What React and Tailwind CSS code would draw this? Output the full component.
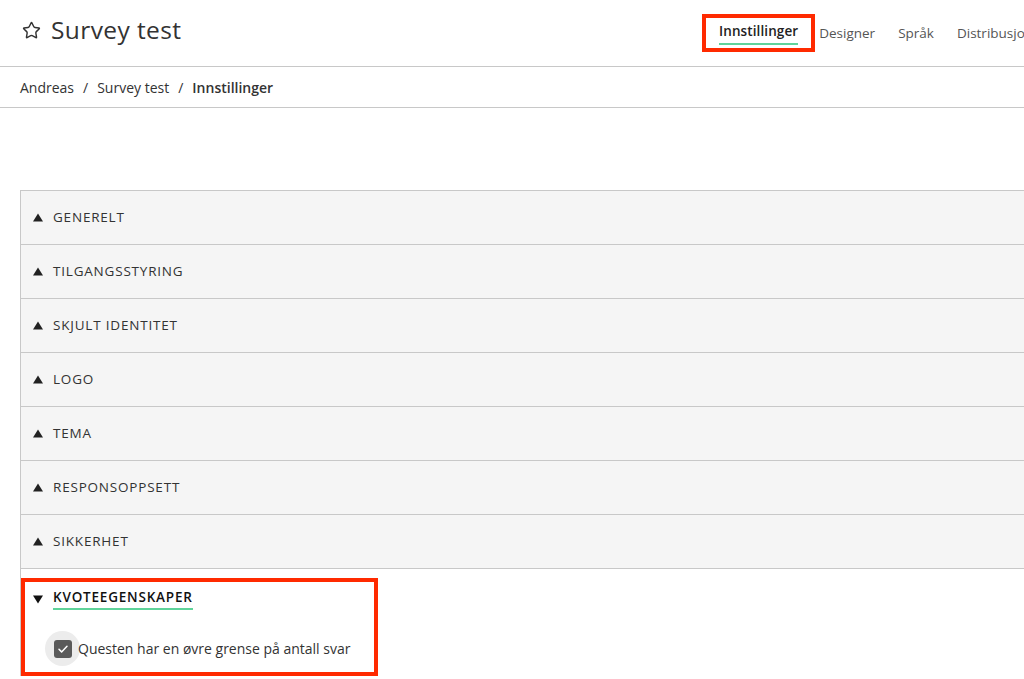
import { Star } from 'lucide-react'

const sections = [
  'GENERELT',
  'TILGANGSSTYRING',
  'SKJULT IDENTITET',
  'LOGO',
  'TEMA',
  'RESPONSOPPSETT',
  'SIKKERHET',
]

function Triangle({ open = false }) {
  return (
    <svg viewBox="0 0 10 10" className="h-[10px] w-[10px]" aria-hidden="true">
      {open ? <path d="M0 1.5h10L5 9.5z" fill="#111" /> : <path d="M5 0.5l5 8H0z" fill="#222" />}
    </svg>
  )
}

export default function App() {
  return (
    <div className="h-[679px] w-[1024px] overflow-hidden bg-white font-['Open_Sans',sans-serif] text-[#333]">
      <header className="flex h-[67px] items-center overflow-hidden border-b border-[#c8c8c8]">
        <div className="flex w-[702px] shrink-0 items-center pl-[22px] pb-[5px]">
          <Star className="h-[19px] w-[19px] text-[#333]" strokeWidth={1.8} />
          <h1 className="ml-[10px] text-[24.5px] leading-none tracking-[0.4px] text-[#333]">Survey test</h1>
        </div>
        <nav className="flex h-full shrink-0 items-center whitespace-nowrap text-[13.5px]">
          <div className="mr-[4px] flex h-[38px] items-center border-4 border-[#ff2a00] px-[13px]">
            <span className="border-b-2 border-[#5fd39a] pb-[1px] font-semibold tracking-[0.1px] text-[#222]">Innstillinger</span>
          </div>
          <span className="mr-[23px] text-[#555]">Designer</span>
          <span className="mr-[23px] text-[#555]">Språk</span>
          <span className="text-[#555]">Distribusjon</span>
        </nav>
      </header>

      <div className="flex h-[41px] items-center border-b border-[#c8c8c8] pl-[20px] text-[14px] text-[#333]">
        <span>Andreas</span>
        <span className="mx-[9px]">/</span>
        <span>Survey test</span>
        <span className="mx-[9px]">/</span>
        <span className="font-semibold">Innstillinger</span>
      </div>

      <div className="ml-[20px] mt-[82px] border-l border-[#c8c8c8]">
        {sections.map((s) => (
          <div
            key={s}
            className="flex h-[54px] items-center border-t border-[#c8c8c8] bg-[#f5f5f5] pl-[12px] text-[13.5px] tracking-[0.8px] text-[#333]"
          >
            <Triangle />
            <span className="ml-[10px]">{s}</span>
          </div>
        ))}
        <div className="border-t border-[#c8c8c8] pt-[9px]">
          <div className="w-[357px] border-4 border-[#ff2a00] pb-[6px]">
            <div className="flex items-center pl-[8px] pt-[5px] text-[13.5px]">
              <Triangle open />
              <span className="ml-[10px] border-b-2 border-[#5fd39a] pb-[1px] font-semibold tracking-[0.8px] text-[#111]">
                KVOTEEGENSKAPER
              </span>
            </div>
            <div className="mt-[21px] flex items-center pl-[20px]">
              <div className="flex h-[35px] w-[35px] items-center justify-center rounded-full bg-[#ececec]">
                <div className="flex h-[18px] w-[18px] items-center justify-center rounded-[3px] bg-[#5a5a5a]">
                  <svg viewBox="0 0 12 12" className="h-[12px] w-[12px]" fill="none">
                    <path d="M2 6.3l2.6 2.6L10 3.3" stroke="#fff" strokeWidth="1.5" strokeLinecap="round" strokeLinejoin="round" />
                  </svg>
                </div>
              </div>
              <span className="ml-[-2px] text-[14px] text-[#333]">Questen har en øvre grense på antall svar</span>
            </div>
          </div>
        </div>
      </div>
    </div>
  )
}
